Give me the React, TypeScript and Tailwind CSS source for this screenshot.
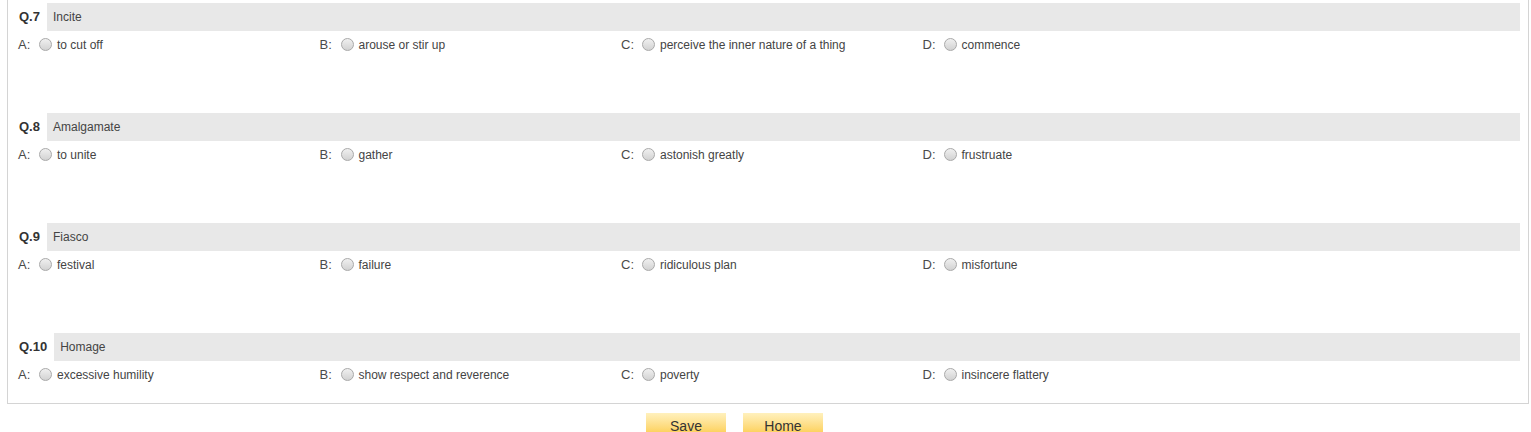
const questions = [
  {
    no: 'Q.7',
    word: 'Incite',
    options: ['to cut off', 'arouse or stir up', 'perceive the inner nature of a thing', 'commence'],
  },
  {
    no: 'Q.8',
    word: 'Amalgamate',
    options: ['to unite', 'gather', 'astonish greatly', 'frustruate'],
  },
  {
    no: 'Q.9',
    word: 'Fiasco',
    options: ['festival', 'failure', 'ridiculous plan', 'misfortune'],
  },
  {
    no: 'Q.10',
    word: 'Homage',
    options: ['excessive humility', 'show respect and reverence', 'poverty', 'insincere flattery'],
  },
];

const letters = ['A', 'B', 'C', 'D'];

function Radio() {
  return (
    <span className="inline-block w-[13px] h-[13px] rounded-full border border-[#a9a9a9] bg-gradient-to-b from-[#f0f0f0] to-[#d2d2d2] shrink-0" />
  );
}

function Question({ no, word, options, last }: { no: string; word: string; options: string[]; last: boolean }) {
  return (
    <div className={last ? '' : 'mb-[55px]'}>
      {/* Header */}
      <div className="flex h-[28px] items-center">
        <span className="pl-[3px] pr-[7px] text-[13px] font-bold text-[#333333]">{no}</span>
        <div className="flex-1 h-full flex items-center bg-[#e8e8e8] pl-[6px] text-[12px] text-[#444444]">
          {word}
        </div>
      </div>

      {/* Options */}
      <div className="flex h-[27px] items-center pl-[2px]">
        {options.map((opt, i) => (
          <label key={i} className="flex items-center w-[301.5px] shrink-0">
            <span className="w-[21px] text-[13px] text-[#4a4a4a]">{letters[i]}:</span>
            <Radio />
            <span className="ml-[5px] text-[12px] text-[#444444]">{opt}</span>
          </label>
        ))}
      </div>
    </div>
  );
}

export default function App() {
  return (
    <div className="bg-white min-h-[432px] font-['Liberation_Sans',Arial,sans-serif]">
      <div className="mx-[7px] w-[1522px] border-x border-b border-[#d4d4d4] pt-[3px] pb-[15px] pl-[8px] pr-[8px]">
        {questions.map((q, i) => (
          <Question key={q.no} {...q} last={i === questions.length - 1} />
        ))}
      </div>

      <div className="flex gap-[17px] pl-[646px] mt-[9px]">
        <button className="w-[80px] h-[24px] bg-gradient-to-b from-[#fff1bd] to-[#fcca3c] text-[14px] text-[#333333] pt-[1px] leading-[22px]">
          Save
        </button>
        <button className="w-[80px] h-[24px] bg-gradient-to-b from-[#fff1bd] to-[#fcca3c] text-[14px] text-[#333333] pt-[1px] leading-[22px]">
          Home
        </button>
      </div>
    </div>
  );
}
